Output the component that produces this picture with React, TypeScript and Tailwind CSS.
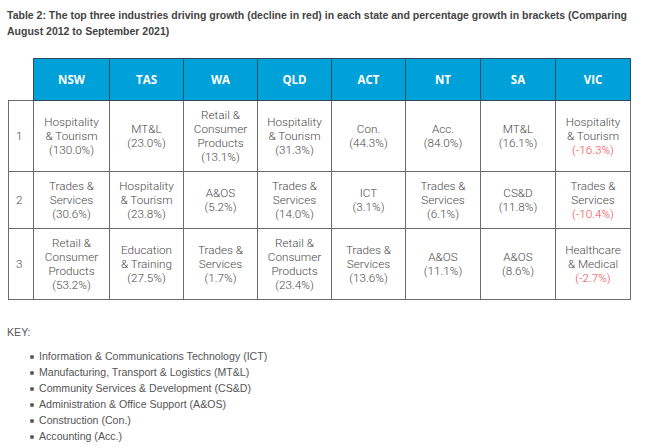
import React from "react";

type Cell = { t: string[]; p: string; neg?: boolean };

const states = ["NSW", "TAS", "WA", "QLD", "ACT", "NT", "SA", "VIC"];

const rows: Cell[][] = [
  [
    { t: ["Hospitality", "& Tourism"], p: "(130.0%)" },
    { t: ["MT&L"], p: "(23.0%)" },
    { t: ["Retail &", "Consumer", "Products"], p: "(13.1%)" },
    { t: ["Hospitality", "& Tourism"], p: "(31.3%)" },
    { t: ["Con."], p: "(44.3%)" },
    { t: ["Acc."], p: "(84.0%)" },
    { t: ["MT&L"], p: "(16.1%)" },
    { t: ["Hospitality", "& Tourism"], p: "(-16.3%)", neg: true },
  ],
  [
    { t: ["Trades &", "Services"], p: "(30.6%)" },
    { t: ["Hospitality", "& Tourism"], p: "(23.8%)" },
    { t: ["A&OS"], p: "(5.2%)" },
    { t: ["Trades &", "Services"], p: "(14.0%)" },
    { t: ["ICT"], p: "(3.1%)" },
    { t: ["Trades &", "Services"], p: "(6.1%)" },
    { t: ["CS&D"], p: "(11.8%)" },
    { t: ["Trades &", "Services"], p: "(-10.4%)", neg: true },
  ],
  [
    { t: ["Retail &", "Consumer", "Products"], p: "(53.2%)" },
    { t: ["Education", "& Training"], p: "(27.5%)" },
    { t: ["Trades &", "Services"], p: "(1.7%)" },
    { t: ["Retail &", "Consumer", "Products"], p: "(23.4%)" },
    { t: ["Trades &", "Services"], p: "(13.6%)" },
    { t: ["A&OS"], p: "(11.1%)" },
    { t: ["A&OS"], p: "(8.6%)" },
    { t: ["Healthcare", "& Medical"], p: "(-2.7%)", neg: true },
  ],
];

const keys = [
  "Information & Communications Technology (ICT)",
  "Manufacturing, Transport & Logistics (MT&L)",
  "Community Services & Development (CS&D)",
  "Administration & Office Support (A&OS)",
  "Construction (Con.)",
  "Accounting (Acc.)",
];

export default function App() {
  return (
    <div className="w-[660px] h-[448px] bg-white overflow-hidden relative">
      <div
        className="pl-[7px] pr-[10px] pt-[7px] text-[10.5px] leading-[16px] font-bold text-[#444]"
        style={{ fontFamily: '"Liberation Sans", Arial, sans-serif' }}
      >
        Table 2: The top three industries driving growth (decline in red) in each state and percentage growth in brackets (Comparing August 2012 to September 2021)
      </div>

      <div className="pl-[8px] mt-[19px]">
        <table className="border-collapse table-fixed w-[622px]">
          <colgroup>
            <col className="w-[25px]" />
            <col className="w-[76px]" />
            <col className="w-[74px]" />
            <col className="w-[74px]" />
            <col className="w-[74px]" />
            <col className="w-[74px]" />
            <col className="w-[75px]" />
            <col className="w-[75px]" />
            <col className="w-[75px]" />
          </colgroup>
          <thead>
            <tr className="h-[42px]">
              <th className="p-0"></th>
              {states.map((s) => (
                <th
                  key={s}
                  className="bg-[#00a0d8] border border-[#2b4d5e] text-white text-[11.5px] font-bold text-center align-middle p-0"
                  style={{ fontFamily: '"Open Sans", sans-serif' }}
                >
                  {s}
                </th>
              ))}
            </tr>
          </thead>
          <tbody
            className="text-[#4a4a4a] text-[11.7px] leading-[14px]"
            style={{ fontFamily: 'Roboto, sans-serif', fontWeight: 300 }}
          >
            {rows.map((r, i) => (
              <tr key={i}>
                <td className="border border-[#6b6b6b] pl-[7px] align-middle py-[7px]">{i + 1}</td>
                {r.map((c, j) => (
                  <td key={j} className="border border-[#6b6b6b] text-center align-middle py-[7px] px-0">
                    {c.t.map((l, k) => (
                      <div key={k} className="whitespace-nowrap">{l}</div>
                    ))}
                    <div className={c.neg ? "text-[#f24a4a]" : ""}>{c.p}</div>
                  </td>
                ))}
              </tr>
            ))}
          </tbody>
        </table>
      </div>

      <div
        className="text-[10.6px] leading-[16px] text-[#555]"
        style={{ fontFamily: '"Liberation Sans", Arial, sans-serif' }}
      >
        <div className="pl-[7px] mt-[24px]">KEY:</div>
        <ul className="mt-[8px] pl-[39px]">
          {keys.map((k) => (
            <li key={k} className="relative">
              <span className="absolute left-[-9px] top-[7px] w-[3.5px] h-[3.5px] rounded-full bg-[#555]"></span>
              {k}
            </li>
          ))}
        </ul>
      </div>
    </div>
  );
}
